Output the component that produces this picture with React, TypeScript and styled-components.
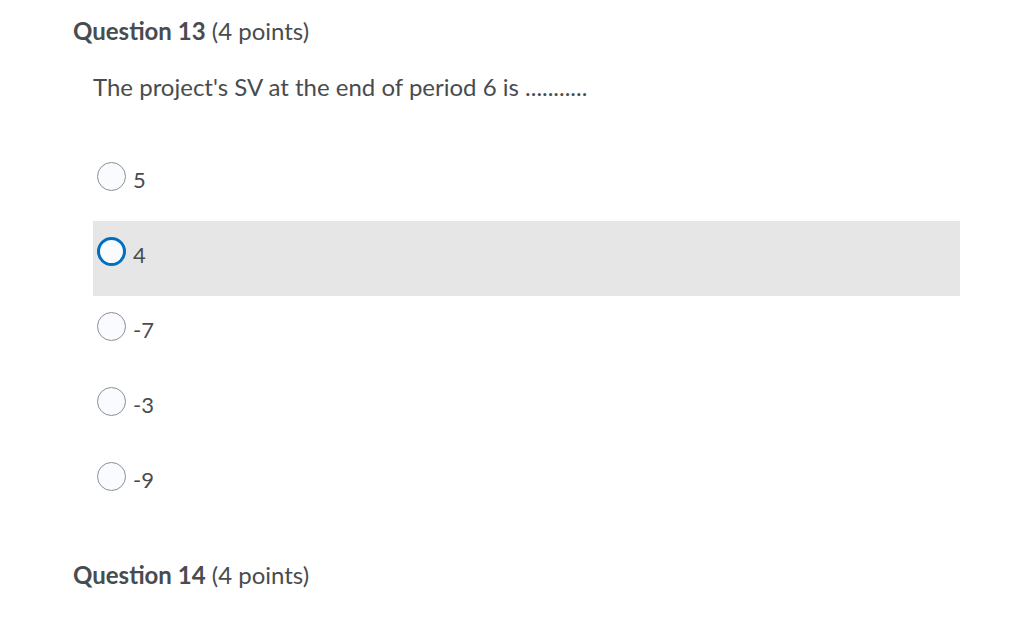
import React from "react";
import styled, { createGlobalStyle } from "styled-components";

const Global = createGlobalStyle`
  html, body { margin: 0; padding: 0; background: #ffffff; }
  body { font-family: Lato, "Open Sans", sans-serif; color: #494c4e; }
`;

const Page = styled.div`
  width: 1024px;
  height: 623px;
  box-sizing: border-box;
  padding: 17px 64px 0 73px;
  overflow: hidden;
`;

const Heading = styled.h2<{ $top?: number }>`
  margin: 0;
  margin-top: ${(p) => p.$top ?? 0}px;
  font-size: 24px;
  line-height: 28px;
  font-weight: 400;
  color: #494c4e;
  b { font-weight: 700; }
`;

const Prompt = styled.p`
  margin: 28px 0 0 20px;
  font-size: 24px;
  line-height: 28px;
`;

const Options = styled.div`
  margin: 45px 0 0 20px;
  display: flex;
  flex-direction: column;
`;

const Row = styled.label<{ $hover?: boolean }>`
  height: 75px;
  box-sizing: border-box;
  padding: 16px 0 0 4px;
  display: flex;
  align-items: flex-start;
  gap: 7px;
  background: ${(p) => (p.$hover ? "#e6e6e6" : "transparent")};
`;

const Radio = styled.span<{ $focus?: boolean }>`
  width: 29px;
  height: 29px;
  box-sizing: border-box;
  border-radius: 50%;
  background: #f9fbff;
  border: ${(p) => (p.$focus ? "3px solid #006fbf" : "1px solid #8b8f93")};
  flex: none;
`;

const Value = styled.span`
  font-size: 22px;
  line-height: 29px;
  padding-top: 3px;
  color: #494c4e;
`;

const options = [
  { v: "5" },
  { v: "4", hover: true },
  { v: "-7" },
  { v: "-3" },
  { v: "-9" },
];

export default function App() {
  return (
    <>
      <Global />
      <Page>
        <Heading>
          <b>Question 13</b> (4 points)
        </Heading>
        <Prompt>The project's SV at the end of period 6 is ...........</Prompt>
        <Options>
          {options.map((o) => (
            <Row key={o.v} $hover={o.hover}>
              <Radio $focus={o.hover} />
              <Value>{o.v}</Value>
            </Row>
          ))}
        </Options>
        <Heading $top={40}>
          <b>Question 14</b> (4 points)
        </Heading>
      </Page>
    </>
  );
}
